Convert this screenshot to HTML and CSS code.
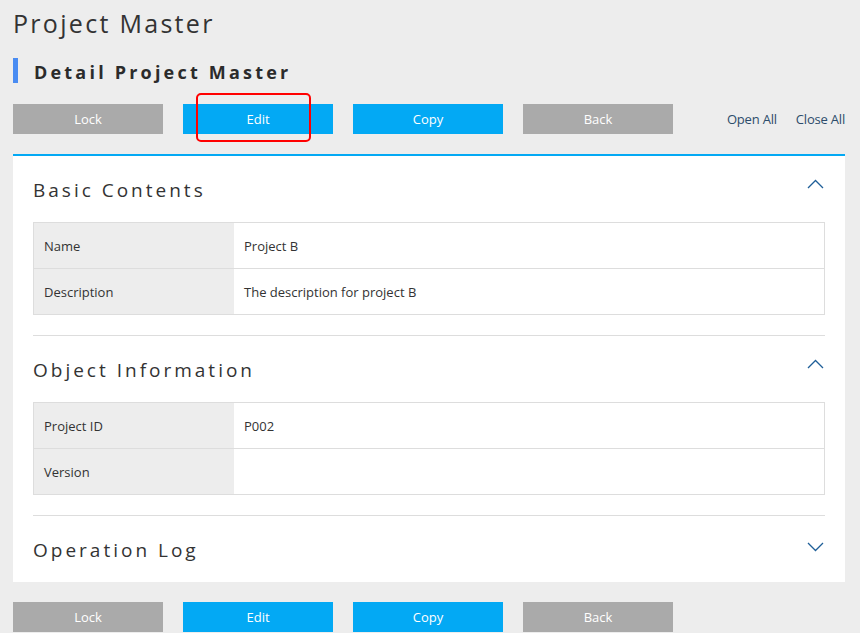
FILE: index.html
```html
<!DOCTYPE html>
<html lang="en">
<head>
<meta charset="utf-8">
<title>Project Master</title>
<link rel="stylesheet" href="styles.css">
</head>
<body>
<h1 class="page-title">Project Master</h1>
<h2 class="sub-title">Detail Project Master</h2>

<div class="actions">
  <button class="btn btn-gray">Lock</button>
  <span class="btn-wrap">
    <button class="btn btn-blue">Edit</button>
    <span class="highlight"></span>
  </span>
  <button class="btn btn-blue">Copy</button>
  <button class="btn btn-gray">Back</button>
  <div class="links">
    <a class="link">Open All</a>
    <a class="link">Close All</a>
  </div>
</div>

<div class="panel">
  <section class="section">
    <div class="section-head">
      <h3 class="section-title">Basic Contents</h3>
      <svg class="chev" width="17" height="10" viewBox="0 0 17 10"><polyline points="1,9 8.5,1.5 16,9" fill="none" stroke="#1f5f98" stroke-width="1.3"/></svg>
    </div>
    <table class="grid">
      <tr><th>Name</th><td>Project B</td></tr>
      <tr><th>Description</th><td>The description for project B</td></tr>
    </table>
  </section>
  <section class="section">
    <div class="section-head">
      <h3 class="section-title">Object Information</h3>
      <svg class="chev" width="17" height="10" viewBox="0 0 17 10"><polyline points="1,9 8.5,1.5 16,9" fill="none" stroke="#1f5f98" stroke-width="1.3"/></svg>
    </div>
    <table class="grid">
      <tr><th>Project ID</th><td>P002</td></tr>
      <tr><th>Version</th><td></td></tr>
    </table>
  </section>
  <section class="section collapsed">
    <div class="section-head">
      <h3 class="section-title">Operation Log</h3>
      <svg class="chev chev-down" width="17" height="10" viewBox="0 0 17 10"><polyline points="1,1 8.5,8.5 16,1" fill="none" stroke="#1f5f98" stroke-width="1.3"/></svg>
    </div>
  </section>
</div>

<div class="actions actions-bottom">
  <button class="btn btn-gray">Lock</button>
  <button class="btn btn-blue">Edit</button>
  <button class="btn btn-blue">Copy</button>
  <button class="btn btn-gray">Back</button>
</div>
</body>
</html>
```

FILE: styles.css
```css
html, body {
  margin: 0;
  padding: 0;
  background: #ededed;
}
body {
  padding: 0 15px 0 13px;
  font-family: "Open Sans", "Noto Sans", sans-serif;
  color: #333;
  height: 633px;
  overflow: hidden;
}
.page-title {
  margin: 0;
  padding-top: 6px;
  font-size: 25px;
  line-height: 34px;
  font-weight: 400;
  letter-spacing: 2.3px;
  color: #333;
}
.sub-title {
  margin: 18px 0 0;
  height: 25px;
  line-height: 28px;
  border-left: 5px solid #4a8cf2;
  padding-left: 16px;
  font-size: 18px;
  font-weight: 700;
  letter-spacing: 3.2px;
  color: #2b2b2b;
}
.actions {
  margin-top: 21px;
  display: flex;
  align-items: center;
  gap: 20px;
  height: 30px;
}
.actions-bottom {
  margin-top: 20px;
}
.btn {
  width: 150px;
  height: 30px;
  border: none;
  padding: 0;
  margin: 0;
  font-family: inherit;
  font-size: 13px;
  color: #fff;
  cursor: pointer;
  display: block;
}
.btn-gray { background: #aaaaaa; }
.btn-blue { background: #03a9f4; }
.btn-wrap {
  position: relative;
  display: block;
}
.highlight {
  position: absolute;
  left: 13px;
  top: -11px;
  width: 111px;
  height: 45px;
  border: 2px solid #f00;
  border-radius: 5px;
  pointer-events: none;
}
.links {
  margin-left: auto;
  display: flex;
  gap: 19px;
}
.link {
  font-size: 13px;
  letter-spacing: -0.2px;
  color: #2c4c6b;
  cursor: pointer;
}
.panel {
  margin-top: 20px;
  background: #fff;
  border-top: 2px solid #03a9f4;
  padding: 0 20px;
}
.section {
  padding-top: 20px;
  padding-bottom: 20px;
  border-bottom: 1px solid #dddddd;
}
.section.collapsed {
  border-bottom: none;
  padding-bottom: 18px;
}
.section-head {
  height: 28px;
  margin-bottom: 18px;
  display: flex;
  align-items: center;
  justify-content: space-between;
}
.collapsed .section-head {
  margin-bottom: 0;
}
.section-title {
  margin: 0;
  font-size: 19px;
  font-weight: 400;
  letter-spacing: 3px;
  color: #333;
  line-height: 28px;
}
.chev {
  margin-right: 1px;
  margin-top: -12px;
}
.chev-down {
  margin-top: -7px;
}
.grid {
  width: 100%;
  border-collapse: collapse;
  font-size: 13px;
}
.grid th, .grid td {
  height: 45px;
  border: 1px solid #dddddd;
  padding: 0 10px;
  text-align: left;
  font-weight: 400;
  color: #333;
}
.grid th {
  width: 180px;
  background: #ededed;
  border-right: none;
}
.grid td {
  border-left: none;
}
```
